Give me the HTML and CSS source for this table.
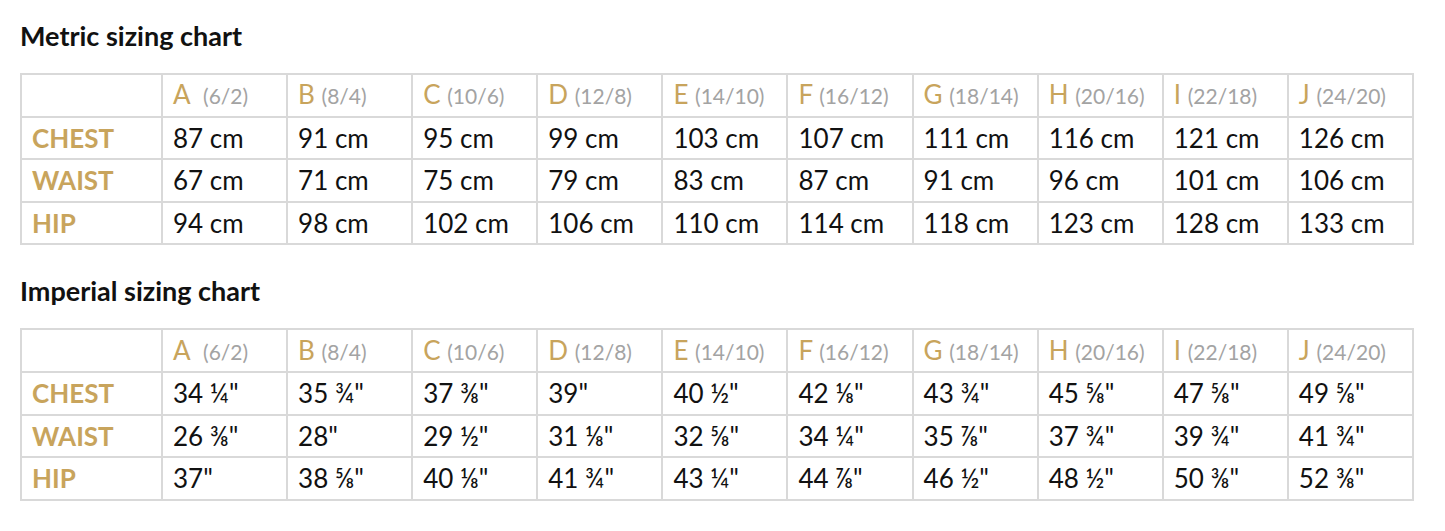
FILE: index.html
```html
<!DOCTYPE html>
<html lang="en">
<head>
<meta charset="utf-8">
<link rel="stylesheet" href="styles.css">
</head>
<body>
<main class="page">
  <section class="chart">
    <h2 class="chart-title">Metric sizing chart</h2>
    <table class="size-table">
      <colgroup><col class="col-label"><col><col><col><col><col><col><col><col><col><col></colgroup>
      <tr class="head">
        <td></td>
        <td><span class="size">A</span>&nbsp; <span class="alt">(6/2)</span></td>
        <td><span class="size">B</span> <span class="alt">(8/4)</span></td>
        <td><span class="size">C</span> <span class="alt">(10/6)</span></td>
        <td><span class="size">D</span> <span class="alt">(12/8)</span></td>
        <td><span class="size">E</span> <span class="alt">(14/10)</span></td>
        <td><span class="size">F</span> <span class="alt">(16/12)</span></td>
        <td><span class="size">G</span> <span class="alt">(18/14)</span></td>
        <td><span class="size">H</span> <span class="alt">(20/16)</span></td>
        <td><span class="size">I</span> <span class="alt">(22/18)</span></td>
        <td><span class="size">J</span> <span class="alt">(24/20)</span></td>
      </tr>
      <tr>
        <td class="label">CHEST</td>
        <td>87 cm</td><td>91 cm</td><td>95 cm</td><td>99 cm</td><td>103 cm</td><td>107 cm</td><td>111 cm</td><td>116 cm</td><td>121 cm</td><td>126 cm</td>
      </tr>
      <tr>
        <td class="label">WAIST</td>
        <td>67 cm</td><td>71 cm</td><td>75 cm</td><td>79 cm</td><td>83 cm</td><td>87 cm</td><td>91 cm</td><td>96 cm</td><td>101 cm</td><td>106 cm</td>
      </tr>
      <tr>
        <td class="label">HIP</td>
        <td>94 cm</td><td>98 cm</td><td>102 cm</td><td>106 cm</td><td>110 cm</td><td>114 cm</td><td>118 cm</td><td>123 cm</td><td>128 cm</td><td>133 cm</td>
      </tr>
    </table>
  </section>

  <section class="chart">
    <h2 class="chart-title">Imperial sizing chart</h2>
    <table class="size-table">
      <colgroup><col class="col-label"><col><col><col><col><col><col><col><col><col><col></colgroup>
      <tr class="head">
        <td></td>
        <td><span class="size">A</span>&nbsp; <span class="alt">(6/2)</span></td>
        <td><span class="size">B</span> <span class="alt">(8/4)</span></td>
        <td><span class="size">C</span> <span class="alt">(10/6)</span></td>
        <td><span class="size">D</span> <span class="alt">(12/8)</span></td>
        <td><span class="size">E</span> <span class="alt">(14/10)</span></td>
        <td><span class="size">F</span> <span class="alt">(16/12)</span></td>
        <td><span class="size">G</span> <span class="alt">(18/14)</span></td>
        <td><span class="size">H</span> <span class="alt">(20/16)</span></td>
        <td><span class="size">I</span> <span class="alt">(22/18)</span></td>
        <td><span class="size">J</span> <span class="alt">(24/20)</span></td>
      </tr>
      <tr>
        <td class="label">CHEST</td>
        <td>34 ¼"</td><td>35 ¾"</td><td>37 ⅜"</td><td>39"</td><td>40 ½"</td><td>42 ⅛"</td><td>43 ¾"</td><td>45 ⅝"</td><td>47 ⅝"</td><td>49 ⅝"</td>
      </tr>
      <tr>
        <td class="label">WAIST</td>
        <td>26 ⅜"</td><td>28"</td><td>29 ½"</td><td>31 ⅛"</td><td>32 ⅝"</td><td>34 ¼"</td><td>35 ⅞"</td><td>37 ¾"</td><td>39 ¾"</td><td>41 ¾"</td>
      </tr>
      <tr>
        <td class="label">HIP</td>
        <td>37"</td><td>38 ⅝"</td><td>40 ⅛"</td><td>41 ¾"</td><td>43 ¼"</td><td>44 ⅞"</td><td>46 ½"</td><td>48 ½"</td><td>50 ⅜"</td><td>52 ⅜"</td>
      </tr>
    </table>
  </section>
</main>
</body>
</html>
```

FILE: styles.css
```css
html, body {
  margin: 0;
  padding: 0;
  background: #ffffff;
}

body {
  font-family: Lato, "Open Sans", "Liberation Sans", sans-serif;
  color: #111111;
}

.page {
  padding: 21px 31px 0 20px;
}

.chart {
  margin-bottom: 31px;
}

.chart-title {
  margin: 0 0 22px 0;
  font-size: 27px;
  line-height: 30px;
  font-weight: 700;
  color: #111111;
}

.size-table {
  width: 1394px;
  border-collapse: collapse;
  table-layout: fixed;
}

.col-label {
  width: 141px;
}

.size-table td {
  border: 2px solid #d9d9d9;
  height: 42.6px;
  padding: 0 10px;
  font-size: 26px;
  line-height: 30px;
  vertical-align: middle;
  white-space: nowrap;
  box-sizing: border-box;
}

.size-table .label {
  color: #c8a45c;
  font-weight: 700;
}

.size {
  color: #c8a45c;
  font-size: 26px;
}

.alt {
  color: #a3a3a3;
  font-size: 21px;
}
```
